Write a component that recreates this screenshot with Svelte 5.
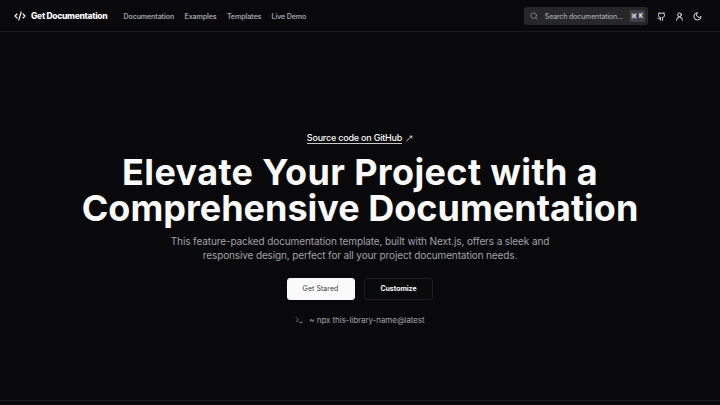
<script>
  const links = ['Documentation', 'Examples', 'Templates', 'Live Demo'];
</script>

<div class="page">
  <header>
    <a class="brand" href="#top">
      <svg class="logo" viewBox="0 0 24 24"><path d="m18 16 4-4-4-4M6 8l-4 4 4 4M14.5 4l-5 16" /></svg>
      <span>Get Documentation</span>
    </a>
    <nav>
      {#each links as link}
        <a href="#top">{link}</a>
      {/each}
    </nav>
    <div class="tools">
      <div class="search">
        <svg viewBox="0 0 24 24"><circle cx="11" cy="11" r="8.500" /><path d="m22 22-4.800-4.800" /></svg>
        <span class="hint">Search documentation...</span>
        <kbd>
          <svg viewBox="0 0 24 24"><path d="M15 6v12a3 3 0 1 0 3-3H6a3 3 0 1 0 3 3V6a3 3 0 1 0-3 3h12a3 3 0 1 0-3-3" /></svg>
          <span>K</span>
        </kbd>
      </div>
      <svg class="icon" viewBox="0 0 24 24"><path d="M15 22v-4a4.800 4.800 0 0 0-1-3.500c3 0 6-2 6-5.500.080-1.250-.270-2.480-1-3.500.280-1.150.280-2.350 0-3.500 0 0-1 0-3 1.500-2.640-.5-5.360-.5-8 0C6 2 5 2 5 2c-.3 1.150-.3 2.350 0 3.500A5.400 5.400 0 0 0 4 9c0 3.500 3 5.500 6 5.500-.390.490-.680 1.050-.850 1.650S8.930 17.380 9 18v4M9 18c-4.510 2-5-2-7-2" /></svg>
      <svg class="icon" viewBox="0 0 24 24"><circle cx="12" cy="7.500" r="5" /><path d="M4.500 22v-1a7.500 7.500 0 0 1 15 0V22" /></svg>
      <svg class="icon" viewBox="0 0 24 24"><path d="M11 2.500a6.500 6.500 0 0 0 10.500 9.500A9.500 9.500 0 1 1 11 2.500Z" /></svg>
    </div>
  </header>

  <main>
    <a class="source" href="#top">
      <span>Source code on GitHub</span>
      <svg viewBox="0 0 12 12"><path d="M1 10 10 2M6.500 2H10v3.500" /></svg>
    </a>
    <h1><span class="first">Elevate Your Project with a</span><span>Comprehensive Documentation</span></h1>
    <p>
      <span class="lead">This feature-packed documentation template, built with Next.js, offers a sleek and</span>
      <span class="rest">responsive design, perfect for all your project documentation needs.</span>
    </p>
    <div class="actions">
      <button class="primary"><span>Get Stared</span></button>
      <button class="outline"><span>Customize</span></button>
    </div>
    <div class="command">
      <svg viewBox="0 0 12 12"><path d="m2 2.500 3 3-3 3M6.500 9.500h4.500" /></svg>
      <span>~ npx this-library-name@latest</span>
    </div>
  </main>
  <footer></footer>
</div>

<style>
  :global(body) { background: #09090b; }
  .page {
    width: 720px; height: 405px; overflow: hidden;
    display: flex; flex-direction: column;
    background: #09090b; color: #fafafa;
    font-family: Inter, "Liberation Sans", sans-serif;
  }
  a { color: inherit; text-decoration: none; }
  svg { fill: none; stroke: currentColor; stroke-width: 2; stroke-linecap: round; stroke-linejoin: round; flex: none; }
  span { white-space: nowrap; }
  header {
    box-sizing: border-box; height: 32px; flex: none; border-bottom: 1px solid #1b1b1e;
    display: flex; align-items: center; padding: 1px 18.500px 0 14px;
  }
  .brand { display: flex; align-items: center; gap: 5px; width: 109.500px; font-size: 8.500px; font-weight: 800; letter-spacing: -0.300px; }
  .logo { width: 12px; height: 12px; stroke-width: 2.300; }
  nav { display: flex; gap: 10.400px; font-size: 7px; font-weight: 600; letter-spacing: -0.090px; color: #a1a1aa; }
  .tools { margin-left: auto; display: flex; align-items: center; gap: 9px; }
  .search {
    box-sizing: border-box; width: 124px; height: 18px; border-radius: 3px; background: #27272a;
    padding: 0 3px 0 6px; display: flex; align-items: center; color: #a1a1aa;
  }
  .search > svg { width: 8px; height: 8px; }
  .hint { font-size: 7px; font-weight: 500; letter-spacing: -0.170px; margin-left: 7.300px; }
  kbd {
    margin-left: auto; width: 15px; height: 12px; border-radius: 2px; background: #3f3f46; color: #fafafa;
    display: flex; align-items: center; justify-content: center; gap: 2px; font: 700 5.500px Inter, sans-serif;
  }
  kbd svg { width: 6px; height: 6px; stroke-width: 2.500; }
  .icon { width: 9px; height: 9px; stroke-width: 2.400; }
  main { height: 368px; flex: none; display: flex; flex-direction: column; align-items: center; }
  .source { display: flex; align-items: center; gap: 4px; margin-top: 100px; height: 13px; font-size: 9px; font-weight: 500; letter-spacing: -0.210px; }
  .source span { line-height: 10px; border-bottom: 1px solid #c8c8ca; }
  .source svg { width: 7px; height: 7px; stroke-width: 1.300; margin-top: -1px; }
  h1 { margin: 9px 0 0; font-size: 36px; line-height: 36px; font-weight: 700; text-align: center; }
  h1 span { display: block; }
  .first { letter-spacing: 0.360px; }
  p { margin: 8px 0 0; font-size: 10px; line-height: 14px; color: #a1a1aa; text-align: center; }
  p span { display: block; }
  .lead { letter-spacing: -0.104px; }
  .rest { letter-spacing: -0.130px; }
  .actions { display: flex; gap: 9.500px; margin: 16px 0 0 -0.500px; }
  button {
    box-sizing: border-box; width: 68px; height: 22px; padding: 0; border-radius: 3px; border: 1px solid #fafafa;
    background: #fafafa; color: #3b3b3f; font: 400 7px/20px Inter, sans-serif;
  }
  .primary { letter-spacing: 0.060px; }
  .outline { width: 69px; background: #09090b; color: #fafafa; border-color: #1f1f22; font-weight: 700; letter-spacing: -0.050px; }
  .command { margin-top: 14px; height: 12px; display: flex; align-items: center; gap: 6px; color: #a1a1aa; font-size: 8px; letter-spacing: -0.060px; }
  .command svg { width: 8px; height: 8px; stroke-width: 1.100; }
  footer { height: 5px; border-top: 1px solid #1b1b1e; }
</style>
